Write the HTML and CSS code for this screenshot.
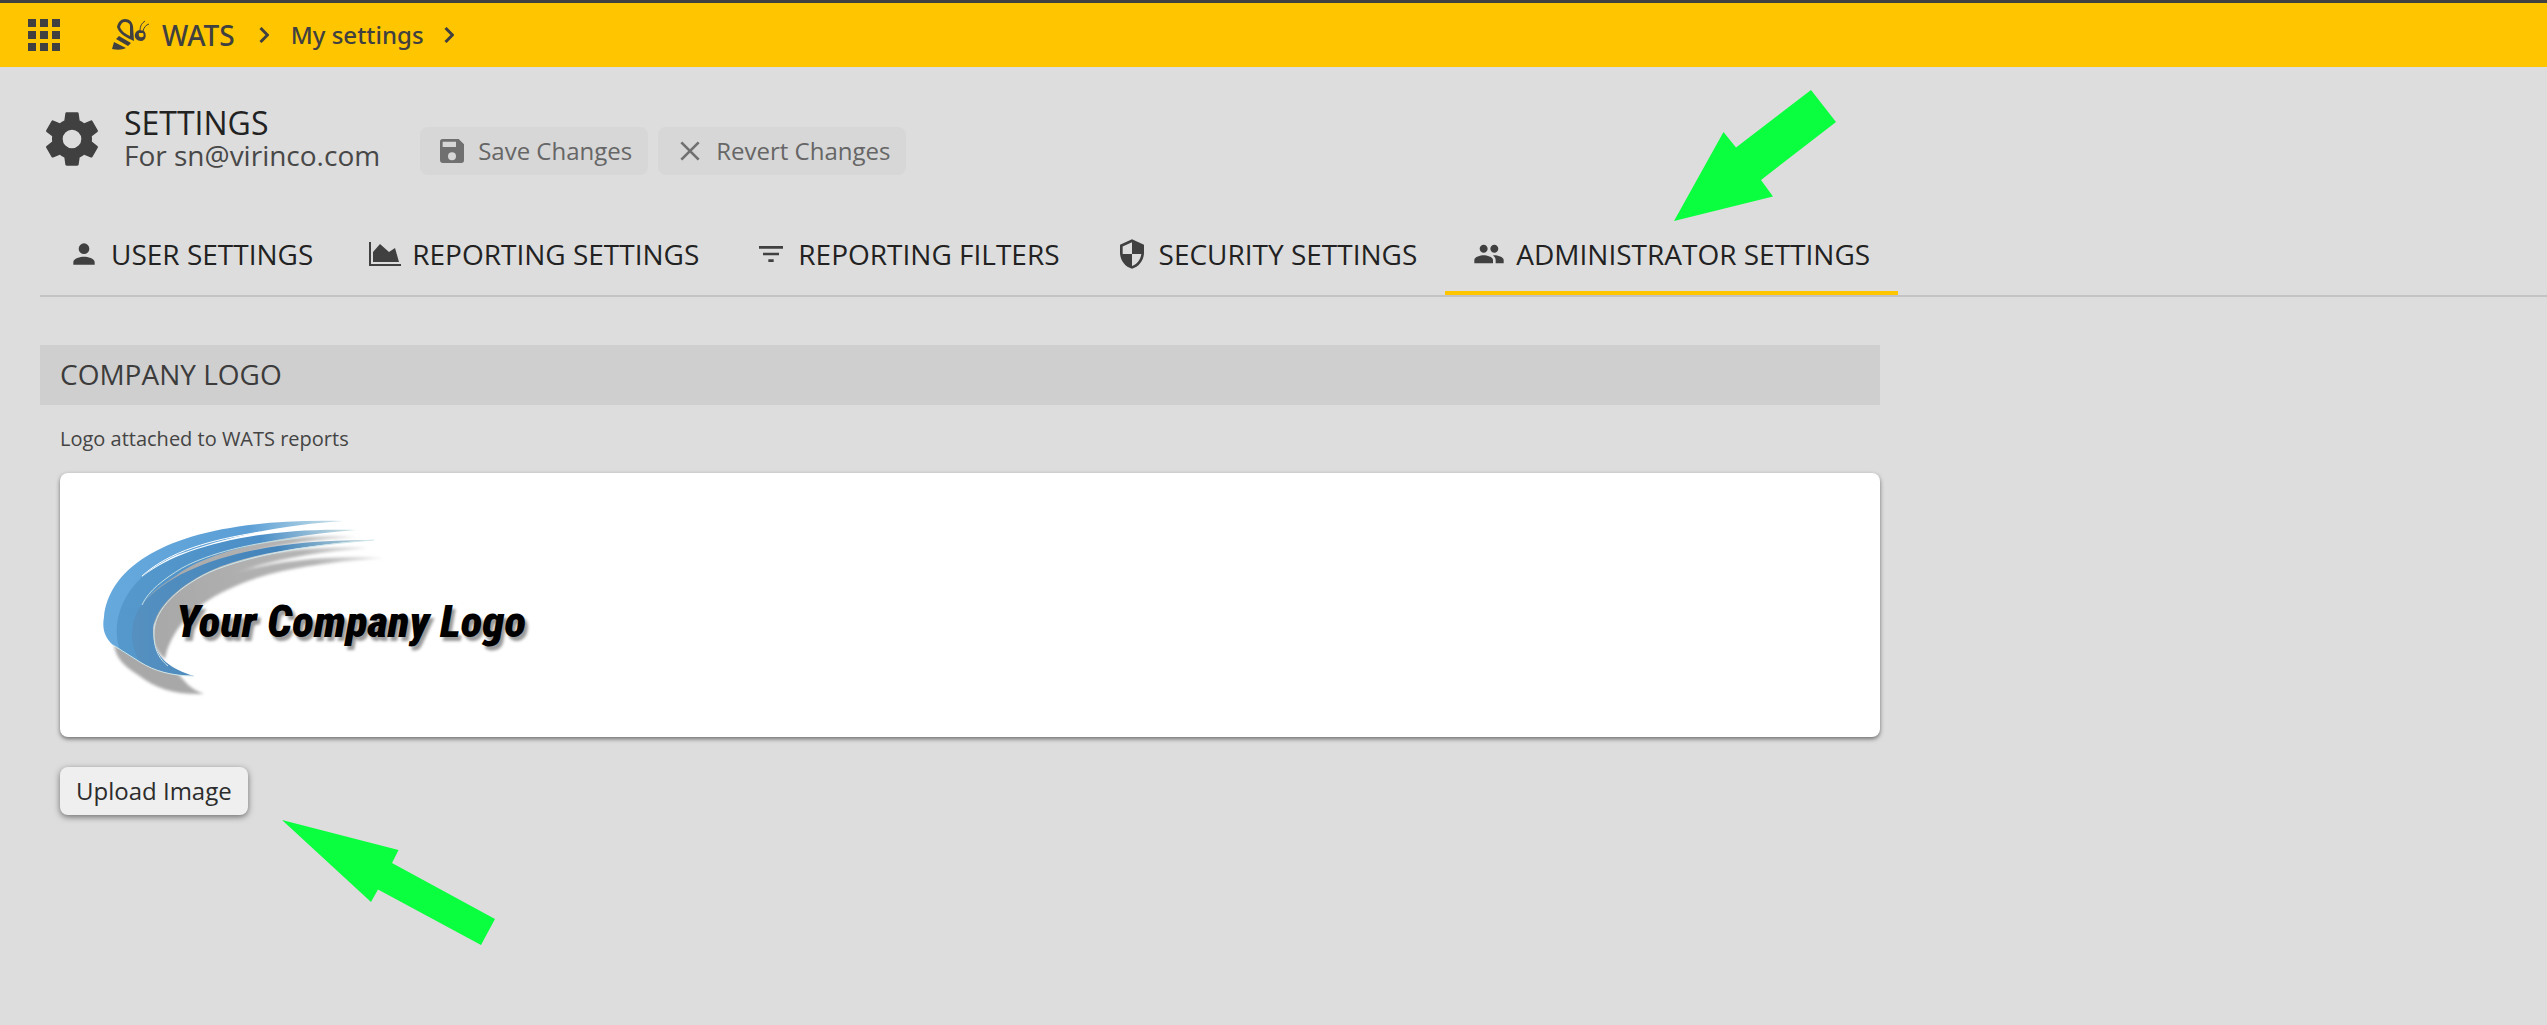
FILE: index.html
```
<!DOCTYPE html>
<html lang="en">
<head>
<meta charset="utf-8">
<title>WATS - My settings</title>
<link rel="stylesheet" href="styles.css">
</head>
<body>
<header class="topbar">
  <button class="apps" aria-label="Applications">
    <svg viewBox="0 0 32 32" width="32" height="32"><path d="M0 0h8v8H0zM12 0h8v8h-8zM24 0h8v8h-8zM0 12h8v8H0zM12 12h8v8h-8zM24 12h8v8h-8zM0 24h8v8H0zM12 24h8v8h-8zM24 24h8v8h-8z"/></svg>
  </button>
  <nav class="crumbs" aria-label="Breadcrumb">
    <a class="brand" href="#">
      <svg viewBox="0 0 38 32" width="38" height="32">
        <path fill-rule="evenodd" d="M5 8C6 3 9 0 13 0c5 0 7 3 8 7l1 15C15 19 7 15 5 8zM8 8c2 5 6 7 10 9V7c0-3-3-4-5-4-3 0-4 2-5 5z"/>
        <path d="M7 17l12 7-3 3L4 20zM2 23l12 6c-4 2-9 2-14 1z"/>
        <path fill-rule="evenodd" d="M23 15c1-3 3-4 5-4l4 1c3 3 2 10-3 10-4 0-7-3-6-7zM27 14c-1 3 1 5 3 4 2 0 2-2 1-4z"/>
        <path class="feeler" d="M28 11c0-4 2-7 5-9M31 12c1-4 3-6 6-7"/>
      </svg>
      <span>WATS</span>
    </a>
    <svg class="chev" viewBox="0 0 10 16" width="10" height="16"><path d="M1.500 1l7 7-7 7"/></svg>
    <a class="page" href="#">My settings</a>
    <svg class="chev" viewBox="0 0 10 16" width="10" height="16"><path d="M1.500 1l7 7-7 7"/></svg>
  </nav>
</header>
<main>
  <div class="heading">
    <svg class="gear" viewBox="0 0 24 24" width="64" height="64"><path d="M12 15.500A3.500 3.500 0 0 1 8.500 12 3.500 3.500 0 0 1 12 8.500a3.500 3.500 0 0 1 3.500 3.500 3.500 3.500 0 0 1-3.500 3.500m7.430-2.530c.04-.32.07-.64.07-.97s-.03-.66-.07-1l2.110-1.630c.19-.15.24-.42.12-.64l-2-3.460c-.12-.22-.39-.31-.61-.22l-2.490 1c-.52-.39-1.060-.73-1.690-.98l-.37-2.650A.506.506 0 0 0 14 2h-4c-.25 0-.46.18-.5.42l-.37 2.650c-.63.25-1.170.59-1.690.98l-2.490-1c-.22-.09-.49 0-.61.22l-2 3.460c-.13.22-.07.49.12.64L4.570 11c-.04.34-.07.67-.07 1s.03.65.07.97l-2.110 1.660c-.19.15-.25.42-.12.64l2 3.460c.12.22.39.3.61.22l2.490-1.010c.52.4 1.060.74 1.690.99l.37 2.650c.04.24.25.42.5.42h4c.25 0 .46-.18.5-.42l.37-2.650c.63-.26 1.170-.59 1.690-.99l2.490 1.010c.22.08.49 0 .61-.22l2-3.460c.12-.22.07-.49-.12-.64z"/></svg>
    <div class="titles">
      <h1>SETTINGS</h1>
      <p>For sn@virinco.com</p>
    </div>
    <div class="actions">
      <button class="btn" disabled>
        <svg viewBox="0 0 24 24" width="32" height="32"><path d="M17 3H5a2 2 0 0 0-2 2v14c0 1.100.9 2 2 2h14a2 2 0 0 0 2-2V7l-4-4zm-5 16a3 3 0 1 1 0-6 3 3 0 0 1 0 6zm3-10H5V5h10v4z"/></svg>
        <span>Save Changes</span>
      </button>
      <button class="btn" disabled>
        <svg viewBox="0 0 24 24" width="32" height="32"><path class="cross" d="M5.500 5.500l13 13M18.500 5.500l-13 13"/></svg>
        <span>Revert Changes</span>
      </button>
    </div>
  </div>
  <nav class="tabs" aria-label="Settings sections">
    <a class="tab" href="#"><svg viewBox="0 0 24 24" width="32" height="32"><path d="M12 12a4 4 0 1 0 0-8 4 4 0 0 0 0 8zm0 2c-2.670 0-8 1.340-8 4v2h16v-2c0-2.660-5.330-4-8-4z"/></svg>USER SETTINGS</a>
    <a class="tab" href="#"><svg viewBox="0 0 32 32" width="32" height="32"><path d="M0 4h2v22h30v2H0zM4 24V14l7-8 9 8 6-4 4 14z"/></svg>REPORTING SETTINGS</a>
    <a class="tab" href="#"><svg viewBox="0 0 24 24" width="32" height="32"><path d="M10 18h4v-2h-4v2zM3 6v2h18V6H3zm3 7h12v-2H6v2z"/></svg>REPORTING FILTERS</a>
    <a class="tab" href="#"><svg viewBox="0 0 24 24" width="32" height="32"><path d="M12 1L3 5v6c0 5.550 3.840 10.740 9 12 5.160-1.260 9-6.450 9-12V5l-9-4zm0 10.990h7c-.53 4.120-3.280 7.790-7 8.940V12H5V6.300l7-3.110v8.800z"/></svg>SECURITY SETTINGS</a>
    <a class="tab active" aria-current="page" href="#"><svg viewBox="0 0 24 24" width="32" height="32"><path d="M16 11c1.660 0 2.990-1.340 2.990-3S17.660 5 16 5s-3 1.340-3 3 1.340 3 3 3zm-8 0c1.660 0 2.990-1.340 2.990-3S9.660 5 8 5 5 6.340 5 8s1.340 3 3 3zm0 2c-2.330 0-7 1.170-7 3.500V19h14v-2.500c0-2.330-4.670-3.500-7-3.500zm8 0c-.29 0-.62.020-.97.050 1.160.84 1.970 1.970 1.970 3.450V19h6v-2.500c0-2.330-4.670-3.500-7-3.500z"/></svg>ADMINISTRATOR SETTINGS</a>
  </nav>
  <section class="panel">
    <h2>COMPANY LOGO</h2>
    <div class="body">
      <p>Logo attached to WATS reports</p>
      <div class="card">
        <svg class="logo" viewBox="0 0 480 264" width="480" height="264" role="img" aria-label="Your Company Logo">
          <defs>
            <filter id="soft" x="-10%" y="-10%" width="120%" height="120%"><feGaussianBlur stdDeviation="1.500"/></filter>
            <linearGradient id="light" x1="0" x2="1"><stop offset="0" stop-color="#66a9dd"/><stop offset=".6" stop-color="#5b9fd6"/><stop offset="1" stop-color="#cfe4e8"/></linearGradient>
            <linearGradient id="mid" x1="0" x2="1"><stop offset="0" stop-color="#5599cc"/><stop offset=".6" stop-color="#4c8fc8"/><stop offset="1" stop-color="#d2e4e4"/></linearGradient>
            <linearGradient id="deep" x1="0" x2="1"><stop offset="0" stop-color="#5590c0"/><stop offset=".6" stop-color="#4384bb"/><stop offset="1" stop-color="#c8dcdc"/></linearGradient>
            <linearGradient id="shade" x1="0" x2="1"><stop offset="0" stop-color="#a8a8a8"/><stop offset=".7" stop-color="#b4b4b4"/><stop offset="1" stop-color="#e4e4e4"/></linearGradient>
          </defs>
          <g filter="url(#soft)">
            <path fill="url(#shade)" d="M84 130C98 96 170 58 298 64 220 68 150 84 90 128z"/>
            <path fill="url(#shade)" d="M92 150C100 106 180 70 308 75 220 82 140 100 98 150z"/>
            <path fill="url(#shade)" d="M92 160C96 120 190 78 324 85 250 90 200 100 167 117 130 134 110 160 105 186 98 180 92 172 92 160z"/>
            <path fill="#a8a8a8" d="M54 172C56 184 62 192 78 202 96 216 116 222 144 221 130 216 124 208 116 198z"/>
          </g>
          <path fill="url(#light)" d="M80 189L53 172C44 164 42 154 44 144 50 84 130 44 284 48 230 51 170 62 117 82 104 88 90 96 82 104L84 150z"/>
          <path fill="url(#mid)" d="M60 177C52 156 58 126 82 104 124 70 210 54 297 57 230 62 150 76 117 102 98 114 86 124 83 132L80 189z"/>
          <path fill="none" stroke="#fff" stroke-width="1" d="M82 103C110 78 150 67 200 59"/>
          <path fill="url(#deep)" d="M80 189C68 170 70 146 83 130 118 90 200 66 314 67 250 72 190 80 150 98 112 116 92 140 93 160 94 186 112 196 134 203 106 202 92 196 80 189z"/>
          <path fill="none" stroke="#cfe6ea" stroke-width="1" d="M53 172L80 189C94 198 112 203 134 203M314 67C250 72 190 82 150 99 112 117 93 141 94 161 94 180 102 188 108 193"/>
          <path fill="none" stroke="#c4dfe4" stroke-width="1" d="M82 132C88 118 104 106 122 95 150 80 190 70 240 65"/>
          <text class="logo-text" x="116" y="164">Your Company Logo</text>
        </svg>
      </div>
      <button class="upload">Upload Image</button>
    </div>
  </section>
</main>
<svg class="arrow arrow-tab" viewBox="0 0 162 131" width="162" height="131" aria-hidden="true"><path d="M0 131L49.500 42 62 57.500 137 0 162 32 87 90 99 106.500z"/></svg>
<svg class="arrow arrow-upload" viewBox="0 0 213 125" width="213" height="125" aria-hidden="true"><path d="M0 0L116.500 30 110 43 213 99 199 125 96 69.500 89 82z"/></svg>
</body>
</html>
```
FILE: styles.css
```
* { box-sizing: border-box; }

body {
  margin: 0;
  position: relative;
  min-height: 100vh;
  background: #ddd;
  color: #222;
  font-family: "Open Sans", "Noto Sans", sans-serif;
}

h1, h2, p { margin: 0; font-weight: inherit; }
button { font: inherit; border: 0; }
a { color: inherit; text-decoration: none; }
svg { flex: none; fill: #404040; }

.topbar {
  display: flex;
  align-items: center;
  height: 67px;
  padding-left: 28px;
  border-top: 3px solid #404040;
  background: #ffc600;
  color: #404040;
}

.apps { display: flex; padding: 0; background: none; }

.crumbs {
  display: flex;
  align-items: center;
  margin-left: 52px;
  font-family: "Noto Sans", "Open Sans", sans-serif;
  font-weight: 500;
}
.brand { display: flex; align-items: center; gap: 12px; font-size: 28px; line-height: 40px; }
.page { font-size: 24px; line-height: 32px; margin: 0 20px 0 22px; }
.brand + .chev { margin-left: 24px; }
.chev { fill: none; stroke: #404040; stroke-width: 3; }
.feeler { fill: none; stroke: #404040; stroke-width: 1; }

.heading { display: flex; align-items: center; padding: 36px 40px 0; }
.titles { margin-left: 20px; }
.titles h1 { font-size: 32px; line-height: 32px; }
.titles p { font-size: 28px; line-height: 32px; color: #484848; }

.actions { display: flex; gap: 10px; margin: 24px 0 0 40px; }
.btn {
  display: flex;
  align-items: center;
  gap: 10px;
  height: 48px;
  padding: 0 16px;
  border-radius: 8px;
  background: #d7d7d7;
  color: #666;
  font-size: 24px;
}
.btn span { padding-bottom: 2px; }
.btn svg { fill: #707070; }
.btn .cross { fill: none; stroke: #707070; stroke-width: 2; }

.tabs { display: flex; margin: 40px 0 0 40px; border-bottom: 2px solid #c3c3c3; }
.tab {
  display: flex;
  align-items: center;
  gap: 11px;
  height: 80px;
  padding: 2px 28px 0;
  border-bottom: 4px solid transparent;
  font-size: 28px;
  white-space: nowrap;
}
.tab.active { border-color: #ffc600; }

.panel { max-width: 1880px; padding: 48px 0 0 40px; }
.panel h2 { padding: 0 20px 2px; background: #cfcfcf; color: #3c3c3c; font-size: 28px; line-height: 58px; }
.body { padding-left: 20px; }
.body p { padding: 20px 0; font-size: 20px; line-height: 28px; color: #444; }

.card {
  display: flex;
  border-radius: 8px;
  background: #fff;
  box-shadow: 0 2px 4px rgba(0, 0, 0, .5);
}
.logo-text {
  fill: #000;
  font: italic 900 45px "Roboto Condensed", Roboto, sans-serif;
  text-shadow: 3px 4px 3px rgba(0, 0, 0, .4);
}

.upload {
  height: 48px;
  margin-top: 30px;
  padding: 0 16px 2px;
  border-radius: 8px;
  background: #efefef;
  color: #2c2c2c;
  font-size: 24px;
  box-shadow: 0 2px 6px rgba(0, 0, 0, .5);
}

.arrow { position: absolute; fill: #0aff3f; }
.arrow-tab { left: 1674px; top: 90px; }
.arrow-upload { left: 282px; top: 820px; }
```
